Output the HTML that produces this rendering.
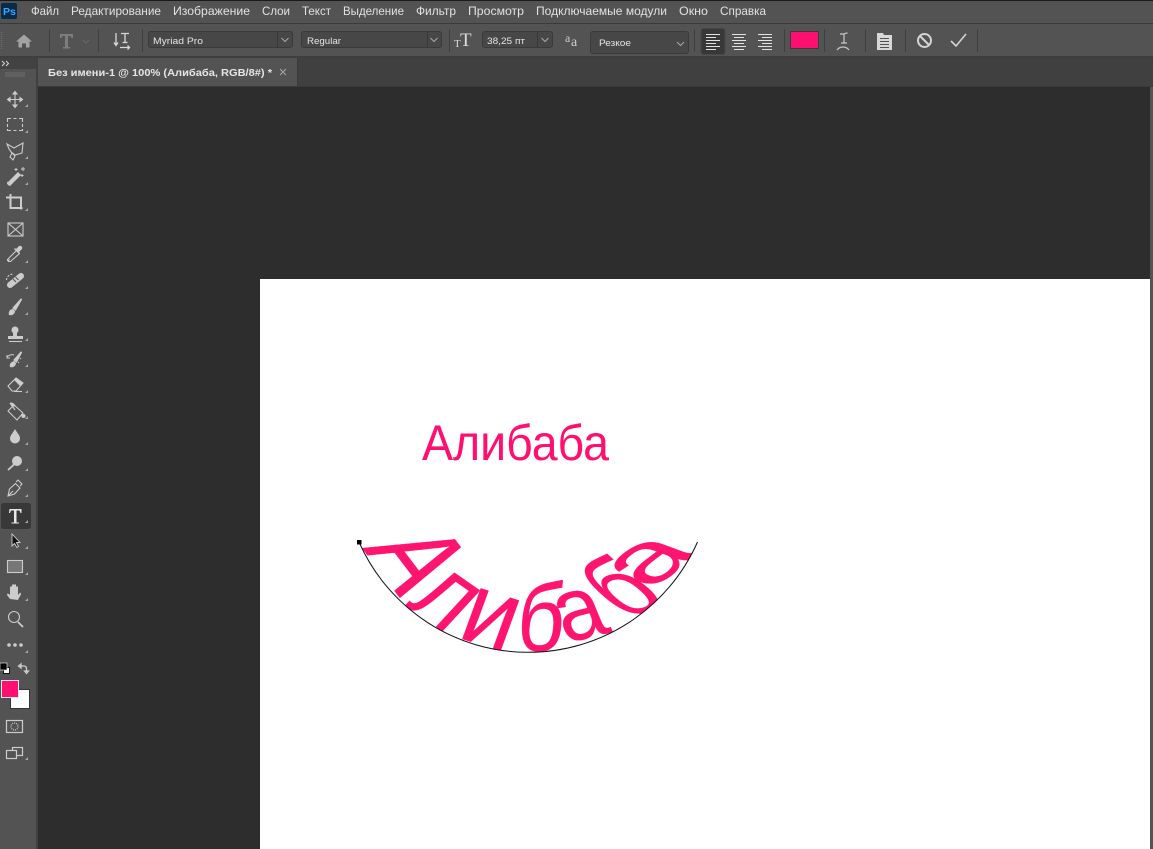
<!DOCTYPE html>
<html><head><meta charset="utf-8">
<style>
html,body{margin:0;padding:0;background:#2d2d2d;width:1153px;height:849px;overflow:hidden}
svg{display:block}
text{font-family:"Liberation Sans","DejaVu Sans",sans-serif}
</style></head><body>
<svg width="1153" height="849" viewBox="0 0 1153 849" xmlns="http://www.w3.org/2000/svg">
<defs>
<clipPath id="bowl"><path d="M340 480H716V540L697.500 542A185 185 0 0 1 359 542L340 540Z"/></clipPath>
</defs>
<!-- base panels -->
<rect width="1153" height="849" fill="#2d2d2d"/>
<rect x="0" y="0" width="1153" height="1" fill="#1a1a1a"/>
<rect x="0" y="1" width="1153" height="22" fill="#535353"/>
<rect x="0" y="23" width="1153" height="1" fill="#3a3a3a"/>
<rect x="0" y="24" width="1153" height="33" fill="#535353"/>
<rect x="0" y="56" width="1153" height="2" fill="#3e3e3e"/>
<rect x="36" y="58" width="1117" height="29" fill="#404040"/>
<rect x="0" y="58" width="36" height="791" fill="#535353"/>
<rect x="0" y="58" width="36" height="11" fill="#424242"/>
<rect x="36" y="58" width="2" height="791" fill="#404040"/>
<rect x="38" y="58" width="259" height="28" fill="#535353"/>
<rect x="297" y="58" width="1" height="28" fill="#3a3a3a"/>
<rect x="38" y="86" width="1115" height="1" fill="#3a3a3a"/>
<rect x="1150" y="87" width="3" height="762" fill="#535353"/>
<!-- canvas -->
<rect x="260" y="279" width="890" height="570" fill="#ffffff"/>
<!-- Ps logo -->
<rect x="1" y="3" width="16" height="16" rx="2" fill="#0b2a4a"/>
<text x="3" y="15" font-size="10.500" font-weight="bold" fill="#33a8ff">Ps</text>
<!-- menu -->
<g font-size="12" fill="#e2e2e2">
<text x="31" y="15" textLength="28" lengthAdjust="spacingAndGlyphs">Файл</text>
<text x="71" y="15" textLength="90" lengthAdjust="spacingAndGlyphs">Редактирование</text>
<text x="173" y="15" textLength="77" lengthAdjust="spacingAndGlyphs">Изображение</text>
<text x="262" y="15" textLength="28" lengthAdjust="spacingAndGlyphs">Слои</text>
<text x="302" y="15" textLength="29" lengthAdjust="spacingAndGlyphs">Текст</text>
<text x="343" y="15" textLength="61" lengthAdjust="spacingAndGlyphs">Выделение</text>
<text x="416" y="15" textLength="40" lengthAdjust="spacingAndGlyphs">Фильтр</text>
<text x="468" y="15" textLength="56" lengthAdjust="spacingAndGlyphs">Просмотр</text>
<text x="536" y="15" textLength="131" lengthAdjust="spacingAndGlyphs">Подключаемые модули</text>
<text x="679" y="15" textLength="29" lengthAdjust="spacingAndGlyphs">Окно</text>
<text x="720" y="15" textLength="46" lengthAdjust="spacingAndGlyphs">Справка</text>
</g>
<!-- options bar -->
<path d="M1.500 32v18" stroke="#6a6a6a" stroke-width="1.500" stroke-dasharray="1 1"/>
<path d="M24 34.500l-8 7h2.500v6h3.500v-4h4v4h3.500v-6h2.500z" fill="#a3a3a3"/>
<g stroke="#3f3f3f" stroke-width="1">
<path d="M49.500 29v23M98.500 29v23M142.500 29v23M449.500 29v23M694.500 29v23M784.500 29v23M824.500 29v23M865.500 29v23M905.500 29v23M977.500 29v23"/>
</g>
<path d="M60 34h13v4h-1.500l-1-2h-2.500v11h2v1.500h-7V47h2V36h-2.500l-1 2H60z" fill="#7d7d7d"/>
<path d="M83 40l3 3 3-3" fill="none" stroke="#696969" stroke-width="1"/>
<g fill="none" stroke="#d8d8d8" stroke-width="1.300">
<path d="M116 33v12M114 42.500l2 3 2-3"/>
<path d="M121 33.500h8M125 33.500v9M122.500 42.500h5M120 47.500h9M127.500 45.500l2 2-2 2"/>
</g>
<!-- font fields -->
<g fill="#474747" stroke="#3a3a3a">
<rect x="148.500" y="31.500" width="144" height="16" rx="2.500"/>
<rect x="301.500" y="31.500" width="140" height="16" rx="2.500"/>
<rect x="482.500" y="31.500" width="70" height="16" rx="2.500"/>
<rect x="590.500" y="31.500" width="98" height="22" rx="2.500"/>
</g>
<path d="M277.500 32v15M427.500 32v15M537.500 32v15" stroke="#383838"/>
<g fill="none" stroke="#a8a8a8" stroke-width="1">
<path d="M281.500 38l3.500 3.500 3.500-3.500M430.500 38l3.500 3.500 3.500-3.500M541.500 38l3.500 3.500 3.500-3.500M677 42l3.500 3.500 3.500-3.500"/>
</g>
<g font-size="9.500" fill="#e4e4e4">
<text x="153" y="44" textLength="50" lengthAdjust="spacingAndGlyphs">Myriad Pro</text>
<text x="307" y="44" textLength="34" lengthAdjust="spacingAndGlyphs">Regular</text>
<text x="487" y="44" textLength="38" lengthAdjust="spacingAndGlyphs">38,25 пт</text>
<text x="599" y="46" textLength="32" lengthAdjust="spacingAndGlyphs">Резкое</text>
</g>
<text x="454" y="47" font-size="11" fill="#dcdcdc" style="font-family:'Liberation Serif',serif">T</text>
<text x="460" y="46" font-size="19" fill="#dcdcdc" style="font-family:'Liberation Serif',serif">T</text>
<text x="565" y="42" font-size="12" fill="#cfcfcf" style="font-family:'Liberation Serif',serif">a</text>
<text x="571" y="46" font-size="14" fill="#cfcfcf" style="font-family:'Liberation Serif',serif">a</text>
<!-- align -->
<rect x="701" y="28.500" width="24" height="26" rx="2.500" fill="#383838" stroke="#474747"/>
<g stroke="#e2e2e2" stroke-width="1">
<path d="M706 34.500h14M706 37.500h10M706 40.500h14M706 43.500h10M706 46.500h14M706 49.500h10"/>
<path d="M732 34.500h14M734 37.500h10M732 40.500h14M734 43.500h10M732 46.500h14M734 49.500h10"/>
<path d="M758 34.500h14M762 37.500h10M758 40.500h14M762 43.500h10M758 46.500h14M762 49.500h10"/>
</g>
<rect x="790.500" y="31.500" width="28" height="17" fill="#ff0f6f" stroke="#3a3a3a"/>
<g fill="none" stroke="#c8c8c8" stroke-width="1.200">
<path d="M840 34h3.500c1 0 2-1 4-1M844 34v9M841 43h6M837 50c3-4 9-4 12 0"/>
</g>
<path d="M877 33h6l1 2h8v15h-15z" fill="#d8d8d8"/>
<path d="M880 38.500h9M880 41.500h9M880 44.500h9M880 47.500h9" stroke="#535353"/>
<g fill="none" stroke="#d4d4d4" stroke-width="2">
<circle cx="924.500" cy="40.500" r="6.500"/>
<path d="M920 36l9 9"/>
<path d="M951 41l5 5 10-12" stroke-width="1.600"/>
</g>
<!-- tab -->
<text x="48" y="76" font-size="10.500" font-weight="bold" fill="#e6e6e6" textLength="224" lengthAdjust="spacingAndGlyphs">Без имени-1 @ 100% (Алибаба, RGB/8#) *</text>
<path d="M280 69l6 6M286 69l-6 6" stroke="#a8a8a8" stroke-width="1"/>
<!-- toolbar head -->
<path d="M2 61l2.500 2.500-2.500 2.500M6 61l2.500 2.500-2.500 2.500" fill="none" stroke="#d8d8d8" stroke-width="1"/>
<path d="M6 72v5M8 72v5M10 72v5M12 72v5M14 72v5M16 72v5M18 72v5M20 72v5M22 72v5M24 72v5" stroke="#6d6d6d" stroke-width="1"/>
<!-- active tool -->
<rect x="1" y="503" width="30" height="26" rx="2.500" fill="#383838"/>
<!-- small triangles -->
<path fill="#a8a8a8" d="M28 104v3h-3zM28 130v3h-3zM28 156v3h-3zM28 182v3h-3zM28 208v3h-3zM28 260v3h-3zM28 286v3h-3zM28 312v3h-3zM28 338v3h-3zM28 364v3h-3zM28 390v3h-3zM28 416v3h-3zM28 442v3h-3zM28 468v3h-3zM28 494v3h-3zM28 520v3h-3zM28 546v3h-3zM28 572v3h-3zM28 598v3h-3zM28 650v3h-3zM28 757v3h-3z"/>
<!-- tools -->
<g fill="none" stroke="#cccccc" stroke-width="1.100">
<!-- move -->
<path d="M15 92v15M8 99.500h15"/>
<path d="M13 94l2-2.500 2 2.500zM13 105l2 2.500 2-2.500zM10 97.500l-2.500 2 2.500 2zM20 97.500l2.500 2-2.500 2z" fill="#cccccc"/>
<!-- marquee -->
<path d="M7.500 122v-3.500H11M13.500 118.500h3M19 118.500h3.500V122M22.500 124v3M22.500 129v1.500H19M16.500 130.500h-3M11 130.500H7.500V129M7.500 127v-3"/>
<!-- lasso -->
<path d="M7 144l7 4 9-5-1 10-7 2-4-3 4 4-2 4-3-3 2-4-3-4z"/>
<!-- wand -->
<path d="M8 182l10-10 3 3-10 10z" fill="#cccccc" stroke="none"/>
<path d="M8 182c-1 1 0 4 3 3" fill="#cccccc"/>
<path d="M16 168v3M14.500 169.500h3M23 167v4M21 169h4M22 174v3M20.500 175.500h3" stroke-width="1"/>
<!-- crop -->
<path d="M6 197.500h4M10.500 194v14h12M10.500 197.500h10.500v12" stroke-width="2"/>
<!-- frame -->
<rect x="8" y="223" width="15" height="13"/>
<path d="M8 223l15 13M23 223l-15 13"/>
<!-- eyedropper -->
<path d="M9 260l-1.500 0.500v-1l9-9 3 3-9 8-2 0z"/>
<path d="M16 249l3-3c2-1 4 1 3 3l-3 3 1 1-1 1-5-5 1-1z" fill="#cccccc" stroke="none"/>
<!-- heal -->
<path d="M10 285L21 276" stroke="#cccccc" stroke-width="6" stroke-linecap="round"/>
<path d="M6.500 280c0-3 3-6 7-6" stroke-dasharray="2 1.500"/>
<path d="M13 279l3 3M15.500 277l3 3" stroke="#535353"/>
<!-- brush -->
<path d="M13 308l8-9 0.500 0.500-6 10.500z" fill="#cccccc"/>
<path d="M9 315c-1-3 1-6 4-6l2 2c0 3-3 5-6 4z" fill="#cccccc" stroke="none"/>
<!-- stamp -->
<circle cx="15" cy="330" r="3.500" fill="#cccccc" stroke="none"/>
<path d="M13 332h4l0 4h6v3H8v-3h5z" fill="#cccccc" stroke="none"/>
<path d="M9 341.500h13"/>
<!-- history brush -->
<path d="M14 360l7-8 0.500 0.500-5 9.500z" fill="#cccccc"/>
<path d="M10 367c-1-3 1-5 4-6l2 2c0 3-3 5-6 4z" fill="#cccccc" stroke="none"/>
<path d="M7 357c2-2 5-3 7-2M7 355v3h3M18 362l1 1M20 358l1 1" stroke-width="1"/>
<!-- eraser -->
<path d="M8 386l8-8 7 5-7 8h-4z"/>
<path d="M14 380l3-2 6 5-3 3z" fill="#cccccc" stroke="none"/>
<path d="M14 391.500h8"/>
<!-- bucket -->
<path d="M8 411l6-6 9 8-6 7z"/>
<path d="M10 403l5 7"/>
<path d="M11 403c2 0 3 1 4 3l-2 0z" fill="#cccccc"/>
<circle cx="23.500" cy="416" r="1.500" fill="#cccccc"/>
<!-- drop -->
<path d="M15 429c2 4 5 6 5 9.500a5 5 0 0 1-10 0c0-3.500 3-5.500 5-9.500z" fill="#cccccc" stroke="none"/>
<!-- dodge -->
<circle cx="17" cy="461" r="5" fill="#cccccc" stroke="none"/>
<path d="M8 470l6-5.500" stroke-width="1.800"/>
<!-- pen -->
<path d="M8 496l1.500-7 6-5.500 4.500 4.500-5.500 6z"/>
<path d="M8 496l5-5M16 482l2-2 4 4-2 2"/>
<!-- T -->
<path d="M9.500 509h12v4h-1l-1-2.500h-3v12h2.500v1h-7.500v-1h2.500v-12h-3l-1 2.500h-1z" fill="#e8e8e8" stroke="none"/>
<!-- path select -->
<path d="M12 534v12l2.500-2.500 2.500 4 1.500-1-2-4h3.500z" fill="#111" stroke="#cfcfcf" stroke-width="0.900"/>
<!-- rect -->
<rect x="7.500" y="560.500" width="15" height="12" fill="#777"/>
<!-- hand -->
<path d="M10 599c-1-2-3-3-3-5 1-1 2 0 3 1v-8c1-1 2-1 2 0v5-7c1-1 2-1 2 0v7-7c1-1 2-1 2 0v7-5c1-1 2-1 2 0v8c1-1 2-3 3-2 0 3-2 4-3 7z" fill="#cccccc" stroke="none"/>
<!-- zoom -->
<circle cx="14" cy="617" r="5.500"/>
<path d="M18 622l5 5" stroke-width="1.800"/>
</g>
<g fill="#cccccc"><circle cx="9" cy="645" r="1.800"/><circle cx="15" cy="645" r="1.800"/><circle cx="21" cy="645" r="1.800"/></g>
<!-- default colours -->
<rect x="3.500" y="667.500" width="6" height="6" fill="#fff" stroke="#111"/>
<rect x="0" y="663" width="7" height="7" fill="#000" stroke="#ddd" stroke-width="0.700"/>
<path d="M20 666h4c1.500 0 2.500 1 2.500 3v3M18.500 666l2.500-2v4zM24.500 671l2 2.500 2-2.500z" fill="none" stroke="#cccccc" stroke-width="1.300"/>
<!-- swatches -->
<rect x="10.500" y="689.500" width="19" height="19" fill="#fff" stroke="#333"/>
<rect x="1.500" y="680.500" width="17" height="17" fill="#ff0f6f" stroke="#e8e8e8"/>
<!-- mask, screen -->
<g fill="none" stroke="#cccccc" stroke-width="1.200">
<rect x="6.500" y="720.500" width="16" height="12"/>
<circle cx="14.500" cy="726.500" r="3.500" stroke-dasharray="1 1"/>
<rect x="12.500" y="747.500" width="10" height="8"/>
<rect x="6.500" y="750.500" width="10" height="8" fill="#535353"/>
</g>
<!-- flat text -->
<text x="422" y="460" font-size="50" fill="#ff0f6f" textLength="187" lengthAdjust="spacingAndGlyphs">Алибаба</text>
<!-- warped text, each letter with its own affine -->
<g font-size="100" fill="#ff1470" stroke="#ff1470" stroke-width="0.300" clip-path="url(#bowl)">
<text transform="matrix(.57 .75 -1.116 .435 362 548)">А</text>
<text transform="matrix(.73 .51 -.71 .77 405 605)">л</text>
<text transform="matrix(.91 .29 -.35 .96 456 637)">и</text>
<text transform="matrix(.83 -.01 -.08 .96 515 651)">б</text>
<text transform="matrix(.84 -.2 .35 .85 566 643)">а</text>
<text transform="matrix(.867 -.24 .8 .72 622 618.800)">б</text>
<text transform="matrix(.95 -.7 .95 .35 650.500 590)">а</text>
</g>
<path d="M359 542A185 185 0 0 0 697.500 542" fill="none" stroke="#111" stroke-width="1"/>
<rect x="357" y="540" width="4.500" height="4.500" fill="#000"/>
</svg>
</body></html>
